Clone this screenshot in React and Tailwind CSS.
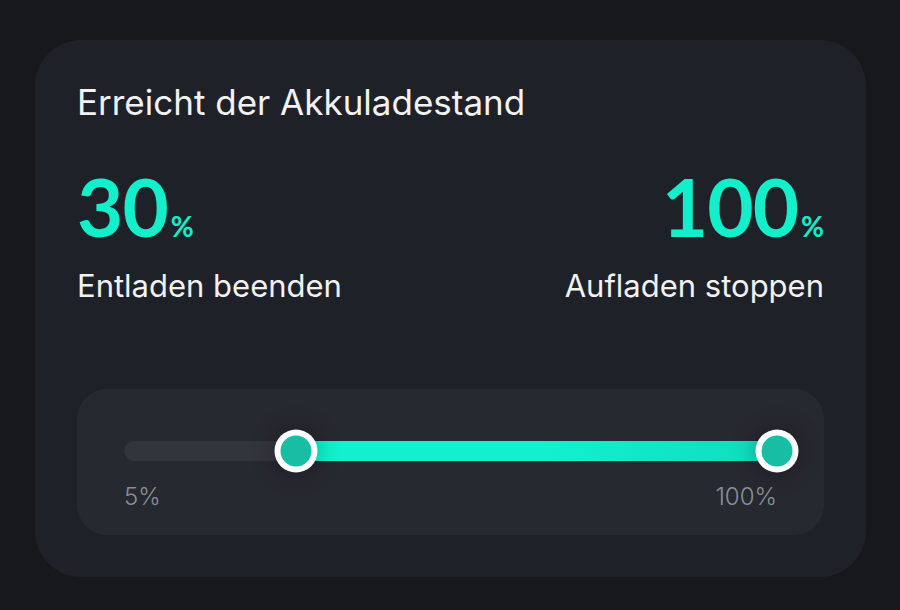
import React from 'react';

const min = 5;
const max = 100;

const pos = (v) => ((v - min) / (max - min)) * 100;

const Thumb = ({ value }) => (
  <div
    className="absolute top-1/2 -translate-x-1/2 -translate-y-1/2 w-[43px] h-[43px] rounded-full bg-white flex items-center justify-center shadow-[0_0_24px_rgba(0,0,0,0.3)]"
    style={{ left: `${pos(value)}%` }}
  >
    <div className="w-[31px] h-[31px] rounded-full bg-[#17bea3]"></div>
  </div>
);

const App = () => {
  const low = 30;
  const high = 100;

  return (
    <div
      className="w-[900px] h-[610px] bg-[#17181c] pt-[40px] pl-[35px]"
      style={{ fontFamily: 'Inter, "Noto Sans", sans-serif' }}
    >
      <div className="w-[831px] h-[537px] rounded-[46px] bg-[#1f2128] px-[42px] pt-[40px] flex flex-col">
        <h1 className="text-[35px] leading-[44px] text-[#f2f2f2] font-normal">Erreicht der Akkuladestand</h1>

        <div className="flex justify-between mt-[42px]">
          <div>
            <div className="flex items-baseline text-[#12efca]" style={{ fontFamily: 'Lato, sans-serif' }}>
              <span className="text-[80px] leading-[80px] tracking-[-1px] font-bold">{low}</span>
              <span className="text-[28px] ml-[3px] font-bold">%</span>
            </div>
            <div className="text-[31px] leading-[38px] text-[#f2f2f2] mt-[20px]">Entladen beenden</div>
          </div>
          <div className="flex flex-col items-end">
            <div className="flex items-baseline text-[#12efca]" style={{ fontFamily: 'Lato, sans-serif' }}>
              <span className="text-[80px] leading-[80px] tracking-[-1px] font-bold">{high}</span>
              <span className="text-[28px] ml-[3px] font-bold">%</span>
            </div>
            <div className="text-[31px] leading-[38px] text-[#f2f2f2] mt-[20px]">Aufladen stoppen</div>
          </div>
        </div>

        <div className="mt-auto mb-[42px] h-[146px] rounded-[30px] bg-[#272930] px-[47px] pt-[52px]">
          <div className="relative h-[20px] rounded-full bg-[#33353d]">
            <div
              className="absolute top-0 h-full bg-gradient-to-r from-[#10f2cd] via-[#10f2cd] to-[#0fdcbd]"
              style={{ left: `${pos(low)}%`, width: `${pos(high) - pos(low)}%` }}
            ></div>
            <Thumb value={low} />
            <Thumb value={high} />
          </div>
          <div className="flex justify-between mt-[21px] text-[24px] leading-[30px] font-light text-[#8a8e98]">
            <span>{min}%</span>
            <span>{max}%</span>
          </div>
        </div>
      </div>
    </div>
  );
};

export default App;
